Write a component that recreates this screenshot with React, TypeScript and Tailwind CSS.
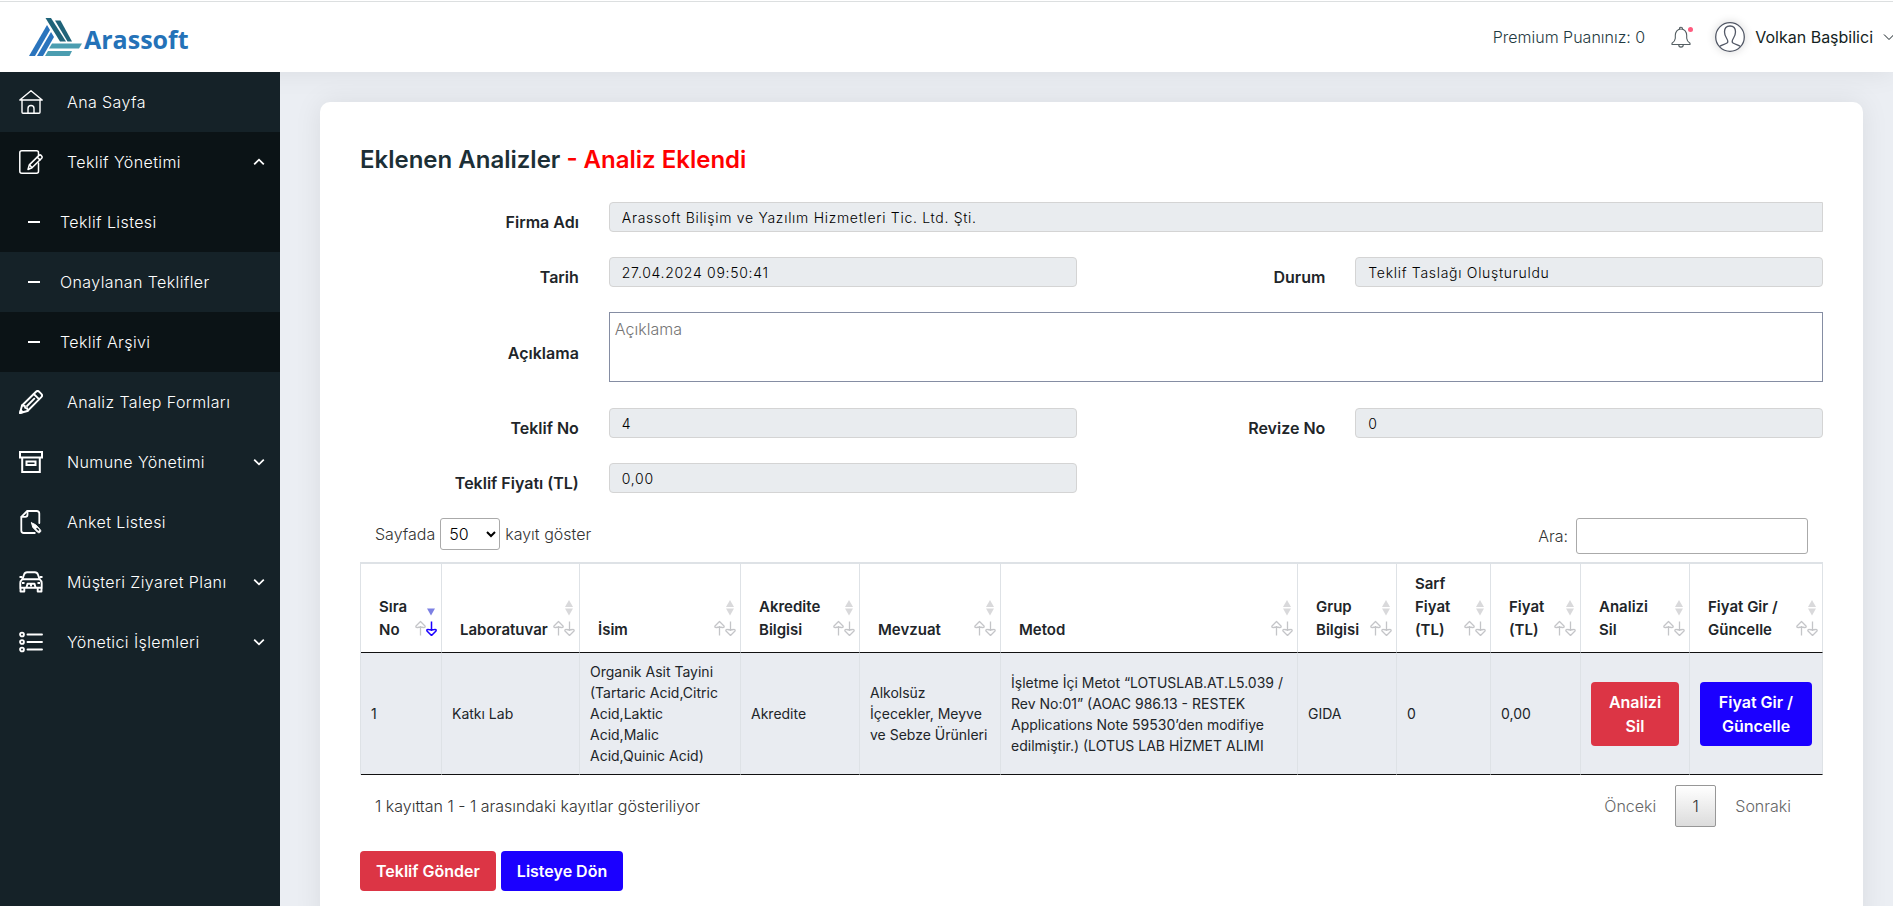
import { useState } from "react";
import type { ReactNode } from "react";

type MenuItem = { label: string; icon: ReactNode; expandable?: boolean };

function HomeIcon() {
    return (
        <svg viewBox="0 0 24 24" className="w-6 h-6" fill="none" stroke="currentColor" strokeWidth="1.4" strokeLinecap="round" strokeLinejoin="round">
            <path d="M.8 10 12 .8 23.2 10H.8Z" />
            <path d="M3 10v12.2c0 .6.4 1 1 1h16c.6 0 1-.4 1-1V10" />
            <path d="M9 23v-4.5a3 3 0 0 1 6 0V23" />
        </svg>
    );
}

function EditFileIcon() {
    return (
        <svg viewBox="0 0 24 24" className="w-6 h-6" fill="none" stroke="currentColor" strokeWidth="1.5" strokeLinecap="round" strokeLinejoin="round">
            <path d="M19.5 5.5V2.8c0-1.2-.8-2-2-2H2.8c-1.2 0-2 .8-2 2v18.4c0 1.2.8 2 2 2h14.7c1.2 0 2-.8 2-2V13" />
            <path d="M9 19.5l1.3-4.6L20 5.4c.6-.6 1.5-.6 2.1 0l.6.7c.6.6.6 1.5 0 2.1L13 17.8 9 19.5Z" />
            <path d="M18.3 7.2l2.7 2.7M10.6 15l2.3 2.5" />
        </svg>
    );
}

function PencilIcon() {
    return (
        <svg viewBox="0 0 24 24" className="w-6 h-6" fill="none" stroke="currentColor" strokeWidth="1.9" strokeLinecap="round" strokeLinejoin="round">
            <path d="M1 23l2-7.5L17 1.8c1-1 2.3-1 3.3 0l2 2c1 1 1 2.3 0 3.3L8.5 21 1 23Z" />
            <path d="M14.8 4l5.2 5.2M3 15.5l2.8.4.4 2 2 .4.4 2.6M15.3 8.7 8 16" />
            <path d="M1 23l.8-2.8 2 2Z" />
        </svg>
    );
}

function ArchiveIcon() {
    return (
        <svg viewBox="0 0 24 24" className="w-6 h-6" fill="none" stroke="currentColor" strokeWidth="2">
            <path d="M1 2h22v5.5H1zM3.2 7.5h17.6V22H3.200zM7.5 11.5h9V15h-9z" />
        </svg>
    );
}

function SurveyIcon() {
    return (
        <svg viewBox="0 0 24 24" className="w-6 h-6" fill="none" stroke="currentColor" strokeWidth="1.8" strokeLinecap="round" strokeLinejoin="round">
            <path d="M20.3 13V3.500c0-1.500-1-2.500-2.500-2.500H8.200L2.300 6.800v13.700c0 1.500 1 2.500 2.500 2.500h11" />
            <path d="M8.500 1.200v3.300c0 1.400-.8 2.300-2.200 2.300H2.500" />
            <path d="M12.500 12.800l1.300 4.600 4.600 4.700c.9.9 2 .9 2.800.1.800-.8.8-1.900-.1-2.800l-4.500-4.700-4.100-1.900Z" fill="currentColor" strokeWidth="1" />
            <path d="M18 18.500l1.500 1.500" stroke="#152228" strokeWidth="1.5" />
        </svg>
    );
}

function CarIcon() {
    return (
        <svg viewBox="0 0 24 24" className="w-6 h-6" fill="none" stroke="currentColor" strokeWidth="1.9" strokeLinejoin="round">
            <path d="M3.300 9.500l1.800-5c.5-1.400 1.500-2.200 3-2.200h7.800c1.500 0 2.500.8 3 2.200l1.800 5" />
            <path d="M3.300 9.300h17.400c1.300 1 2 2.300 2 4v4.500H1.300v-4.500c0-1.700.7-3 2-4Z" />
            <path d="M1.500 18v3.500h3.800V18M18.700 18v3.500h3.800V18M.5 7h2.800M20.700 7h2.800M7.500 17.500l1-3.800h7l1 3.800M3 13h2.500M18.500 13H21M11 15.500h2" />
        </svg>
    );
}

function ListIcon() {
    return (
        <svg viewBox="0 0 24 24" className="w-6 h-6" fill="none" stroke="currentColor" strokeWidth="1.9" strokeLinecap="round">
            <circle cx="3" cy="4.5" r="1.9" />
            <circle cx="3" cy="12" r="1.9" />
            <circle cx="3" cy="19.5" r="1.9" />
            <path d="M8.5 4.5H23M8.5 12H23M8.5 19.5H23" />
        </svg>
    );
}

function Chevron({ up = false }: { up?: boolean }) {
    return (
        <svg viewBox="0 0 12 8" className="w-3 h-2 shrink-0" fill="none" stroke="currentColor" strokeWidth="1.8">
            <path d={up ? "M1.2 6.3 6 1.7l4.8 4.6" : "M1.2 1.7 6 6.3l4.8-4.6"} />
        </svg>
    );
}

function Logo() {
    return (
        <a href="#" className="flex items-center text-[#2472b8]">
            <svg viewBox="0 0 53 38" className="w-[53px] h-[38px]">
                <path d="M0 38 18 7l3 5L6 38Z" fill="#2a74bd" />
                <path d="M8 38 22 14l3 5-11 19Z" fill="#2a74bd" />
                <path d="M16.5 0H22l15 23.5h-6Z" fill="#1f6379" />
                <path d="M26 2.5h5.5L43 23.5h-4.5Z" fill="#1f6379" />
                <path d="M23 25.5h30l-3 5H20Z" fill="#4b9db0" />
                <path d="M19 33h24l-2.5 5H16Z" fill="#4b9db0" />
            </svg>
            <span className="pt-1.5 pl-0.5 text-[25px] font-bold font-['Open_Sans',sans-serif]">Arassoft</span>
        </a>
    );
}

function SortIcon({ active = false }: { active?: boolean }) {
    return (
        <svg viewBox="0 0 22 36" className="absolute right-1 bottom-4 w-[22px] h-9" fill="none" strokeLinejoin="round">
            {!active && <path d="M12 7l4-7 4 7Z" fill="#d9d9db" />}
            <path d="M12 8.5h8l-4 7Z" fill={active ? "#7c80e3" : "#d9d9db"} />
            <path d="M5.5 35.5V26M5.5 21.5 1 26c-.5 1.200.5 1.800 1.500 1.500l3-.5 3 .5c1 .3 2-.3 1.500-1.500Z" stroke="#c4c5c8" strokeWidth="1.3" />
            <path
                d="M16.5 21.5V31M16.5 35.5 12 31c-.5-1.200.5-1.800 1.500-1.500l3 .5 3-.5c1-.3 2 .3 1.500 1.500Z"
                stroke={active ? "#1b00ff" : "#c4c5c8"}
                strokeWidth={active ? 1.5 : 1.3}
            />
        </svg>
    );
}

const menu: MenuItem[] = [
    { label: "Analiz Talep Formları", icon: <PencilIcon /> },
    { label: "Numune Yönetimi", icon: <ArchiveIcon />, expandable: true },
    { label: "Anket Listesi", icon: <SurveyIcon /> },
    { label: "Müşteri Ziyaret Planı", icon: <CarIcon />, expandable: true },
    { label: "Yönetici İşlemleri", icon: <ListIcon />, expandable: true },
];

const submenu = [
    { label: "Teklif Listesi", active: false },
    { label: "Onaylanan Teklifler", active: true },
    { label: "Teklif Arşivi", active: false },
];

const columns = [
    { title: "Sıra No", width: "w-[81px]" },
    { title: "Laboratuvar", width: "w-[138px]" },
    { title: "İsim", width: "w-[161px]" },
    { title: "Akredite Bilgisi", width: "w-[119px]" },
    { title: "Mevzuat", width: "w-[141px]" },
    { title: "Metod", width: "" },
    { title: "Grup Bilgisi", width: "w-[99px]" },
    { title: "Sarf Fiyat (TL)", width: "w-[94px]" },
    { title: "Fiyat (TL)", width: "w-[90px]" },
    { title: "Analizi Sil", width: "w-[109px]" },
    { title: "Fiyat Gir / Güncelle", width: "w-[133px]" },
];

const rows = [
    [
        "1",
        "Katkı Lab",
        "Organik Asit Tayini (Tartaric Acid,Citric Acid,Laktic Acid,Malic Acid,Quinic Acid)",
        "Akredite",
        "Alkolsüz İçecekler, Meyve ve Sebze Ürünleri",
        "İşletme İçi Metot “LOTUSLAB.AT.L5.039 / Rev No:01” (AOAC 986.13 - RESTEK Applications Note 59530’den modifiye edilmiştir.) (LOTUS LAB HİZMET ALIMI",
        "GIDA",
        "0",
        "0,00",
    ],
];

function FieldLabel({ id, children }: { id: string; children: ReactNode }) {
    return (
        <label htmlFor={id} className="col-span-2 pt-2.5 text-right leading-5 font-semibold text-[#212529]">
            {children}
        </label>
    );
}

function ReadonlyField({ id, value, className }: { id: string; value: string; className: string }) {
    return (
        <input
            id={id}
            readOnly
            value={value}
            className={`h-[30px] border border-[#d4d4d4] bg-[#e9ecef] px-3 text-sm font-light tracking-wider text-black outline-none ${className}`}
        />
    );
}

function Sidebar() {
    return (
        <aside className="relative z-20 w-[280px] shrink-0 bg-[#152228] text-white font-light tracking-wide">
            <nav>
                <a href="#" className="flex h-15 items-center gap-6 pl-[19px] pr-[15px]">
                    <HomeIcon />
                    <span>Ana Sayfa</span>
                </a>
                <div className="bg-[#0b1316]">
                    <a href="#" className="flex h-15 items-center gap-6 pl-[19px] pr-[15px]">
                        <EditFileIcon />
                        <span className="flex-1">Teklif Yönetimi</span>
                        <Chevron up />
                    </a>
                    {submenu.map((item) => (
                        <a key={item.label} href="#" className={`flex h-15 items-center gap-5 pl-7 ${item.active ? "bg-[#152228]" : ""}`}>
                            <span className="w-3 h-0.5 bg-white" />
                            <span>{item.label}</span>
                        </a>
                    ))}
                </div>
                {menu.map((item) => (
                    <a key={item.label} href="#" className="flex h-15 items-center gap-6 pl-[19px] pr-[15px]">
                        {item.icon}
                        <span className="flex-1">{item.label}</span>
                        {item.expandable && <Chevron />}
                    </a>
                ))}
            </nav>
        </aside>
    );
}

function Header() {
    return (
        <header className="relative z-10 shrink-0 bg-white pt-px shadow-[0_0_28px_rgba(0,0,0,0.08)]">
            <div className="flex h-[71px] items-center justify-between border-t border-[#dcdfe0] pl-[29px]">
                <Logo />
                <div className="flex items-center">
                    <span className="font-light text-[#1f3a42]">Premium Puanınız: 0</span>
                    <button className="ml-[26px] text-[#555f63]" aria-label="Bildirimler">
                        <svg viewBox="0 0 24 22" className="w-6 h-[22px]" fill="none" stroke="currentColor" strokeWidth="1.1" strokeLinejoin="round">
                            <path d="M1 18.500v-1.200c2-1.500 3.300-3 3.300-5V9.500C4.300 6 6.500 3 10 3s5.700 3 5.700 6.500v2.800c0 2 1.300 3.500 3.300 5v1.200H1Z" />
                            <path d="M8.500 3.200V2.500c0-1.700 3-1.700 3 0v.7M7.700 18.500c0 3.500 4.600 3.500 4.600 0" />
                            <circle cx="19.5" cy="3.5" r="2.5" fill="#ff5b7f" stroke="none" />
                        </svg>
                    </button>
                    <a href="#" className="ml-5 -mr-0.5 flex items-center text-[#131e22]">
                        <span className="rounded-full shadow-[0_0_10px_rgba(0,0,0,0.16)]">
                            <svg viewBox="0 0 30 30" className="w-[30px] h-[30px]" fill="none" stroke="#525866" strokeWidth="1.3">
                                <circle cx="15" cy="15" r="14.3" />
                                <path d="M4.500 24.500c2-1.500 5-2 7.500-3.500 1.300-1 .8-2.800-.3-4.500-1.500-2.300-2.200-4-2.200-6.500 0-4 2-6 5.500-6s5.500 2 5.500 6c0 2.500-.7 4.200-2.200 6.500-1.100 1.700-1.600 3.500-.3 4.500 2.500 1.500 5.500 2 7.500 3.500" />
                            </svg>
                        </span>
                        <span className="mx-2.5">Volkan Başbilici</span>
                        <svg viewBox="0 0 12 8" className="w-3 h-2" fill="none" stroke="currentColor">
                            <path d="M1 1.5 6 6.5l5-5" />
                        </svg>
                    </a>
                </div>
            </div>
        </header>
    );
}

export default function App() {
    const [pageSize, setPageSize] = useState("50");
    const [note, setNote] = useState("");
    const [search, setSearch] = useState("");

    return (
        <div className="flex h-screen flex-col overflow-hidden bg-[#ebeef3] text-base font-['Inter',sans-serif]">
            <Header />
            <div className="flex min-h-0 flex-1">
                <Sidebar />
                <main className="min-w-0 flex-1 overflow-y-auto pt-[30px] pr-[30px] pl-10 pb-8 [scrollbar-width:none]">
                    <section className="rounded-[10px] bg-white p-10 shadow-[0_0_28px_rgba(0,0,0,0.08)]">
                        <h1 className="mb-6 text-2xl leading-9 font-semibold text-[#1c2f36]">
                            Eklenen Analizler <span className="text-[#ff0000]">- Analiz Eklendi</span>
                        </h1>

                        <form className="grid grid-cols-12 items-center gap-x-[30px] gap-y-[25px]">
                            <FieldLabel id="firma">Firma Adı</FieldLabel>
                            <ReadonlyField id="firma" value="Arassoft Bilişim ve Yazılım Hizmetleri Tic. Ltd. Şti." className="col-span-10 rounded-l" />

                            <FieldLabel id="tarih">Tarih</FieldLabel>
                            <ReadonlyField id="tarih" value="27.04.2024 09:50:41" className="col-span-4 rounded" />
                            <FieldLabel id="durum">Durum</FieldLabel>
                            <ReadonlyField id="durum" value="Teklif Taslağı Oluşturuldu" className="col-span-4 rounded" />

                            <FieldLabel id="aciklama">Açıklama</FieldLabel>
                            <textarea
                                id="aciklama"
                                placeholder="Açıklama"
                                value={note}
                                onChange={(e) => setNote(e.target.value)}
                                className="col-span-10 mb-px h-[70px] resize-none border border-[#858da3] px-[5px] py-1 font-light placeholder:text-[#757575]"
                            />

                            <FieldLabel id="teklif-no">Teklif No</FieldLabel>
                            <ReadonlyField id="teklif-no" value="4" className="col-span-4 rounded" />
                            <FieldLabel id="revize-no">Revize No</FieldLabel>
                            <ReadonlyField id="revize-no" value="0" className="col-span-4 rounded" />

                            <FieldLabel id="fiyat">Teklif Fiyatı (TL)</FieldLabel>
                            <ReadonlyField id="fiyat" value="0,00" className="col-span-4 rounded" />
                        </form>

                        <div className="mt-[25px] mb-2 flex items-start justify-between px-[15px] font-light text-[#333333]">
                            <label className="flex items-center gap-[5px]">
                                Sayfada
                                <select
                                    value={pageSize}
                                    onChange={(e) => setPageSize(e.target.value)}
                                    className="h-8 w-[60px] rounded-[3px] border border-[#aaaaaa] px-1 text-black"
                                >
                                    <option>10</option>
                                    <option>25</option>
                                    <option>50</option>
                                </select>
                                kayıt göster
                            </label>
                            <label className="flex items-center gap-2">
                                Ara:
                                <input
                                    type="search"
                                    value={search}
                                    onChange={(e) => setSearch(e.target.value)}
                                    className="h-9 w-[232px] rounded-[3px] border border-[#aaaaaa] px-1.5"
                                />
                            </label>
                        </div>

                        <table className="w-full table-fixed border-separate border-spacing-0 border-l border-[#dee2e6] text-[#212529]">
                            <thead>
                                <tr>
                                    {columns.map((col, i) => (
                                        <th
                                            key={col.title}
                                            aria-sort={i === 0 ? "descending" : undefined}
                                            className={`relative border-t-2 border-r border-b border-t-[#dee2e6] border-r-[#dee2e6] border-b-[#111111] pt-2 pr-[30px] pb-[11px] pl-[18px] text-left align-bottom text-[15px] leading-[23px] font-semibold ${col.width}`}
                                        >
                                            {col.title}
                                            <SortIcon active={i === 0} />
                                        </th>
                                    ))}
                                </tr>
                            </thead>
                            <tbody>
                                {rows.map((row) => (
                                    <tr key={row[0]} className="bg-[#e9ecf1] text-sm leading-[21px]">
                                        {row.map((cell, i) => (
                                            <td key={i} className="border-r border-b border-r-[#dee2e6] border-b-[#111111] px-2.5 py-2">
                                                {cell}
                                            </td>
                                        ))}
                                        <td className="border-r border-b border-r-[#dee2e6] border-b-[#111111] px-2.5 py-2">
                                            <button className="w-full rounded bg-[#dc3545] px-4 py-2 text-base font-semibold text-white">Analizi Sil</button>
                                        </td>
                                        <td className="border-r border-b border-r-[#dee2e6] border-b-[#111111] px-2.5 py-2">
                                            <button className="w-full rounded bg-[#1b00ff] px-4 py-2 text-base font-semibold text-white">Fiyat Gir / Güncelle</button>
                                        </td>
                                    </tr>
                                ))}
                            </tbody>
                        </table>

                        <div className="mt-2.5 flex items-center justify-between px-[15px] font-light text-[#333333]">
                            <p>1 kayıttan 1 - 1 arasındaki kayıtlar gösteriliyor</p>
                            <nav className="flex items-center gap-0.5">
                                <button className="px-[17px] py-2 text-[#666666]">Önceki</button>
                                <button className="h-[42px] w-[41px] rounded-xs border border-[#979797] bg-linear-to-b from-white to-[#dcdcdc]">1</button>
                                <button className="px-[17px] py-2 text-[#666666]">Sonraki</button>
                            </nav>
                        </div>

                        <div className="mt-6 flex gap-[5px]">
                            <button className="h-10 rounded bg-[#dc3545] px-4 font-semibold text-white">Teklif Gönder</button>
                            <button className="h-10 rounded bg-[#1b00ff] px-4 font-semibold text-white">Listeye Dön</button>
                        </div>
                    </section>
                </main>
            </div>
        </div>
    );
}
